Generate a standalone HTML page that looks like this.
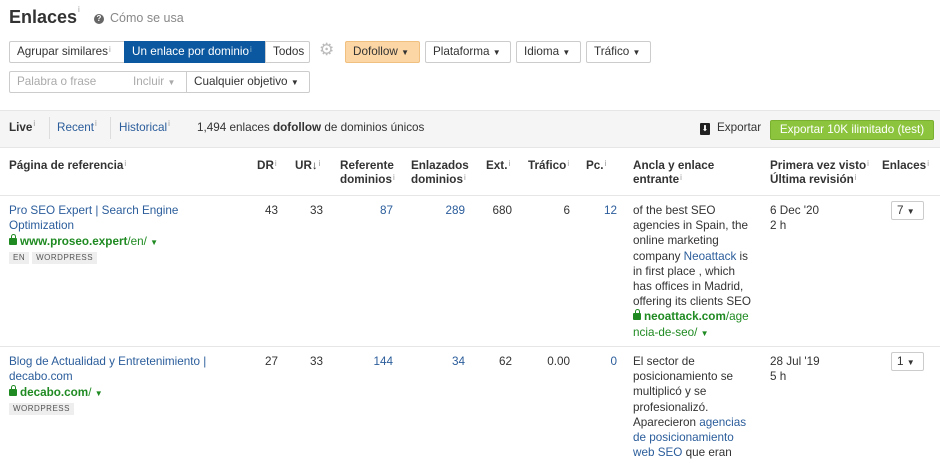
<!DOCTYPE html>
<html><head><meta charset="utf-8"><style>
*{margin:0;padding:0;box-sizing:border-box}
body{width:940px;height:463px;overflow:hidden;background:#fff;font-family:"Liberation Sans",Arial,sans-serif;font-size:11.7px;color:#333;position:relative}
.a{position:absolute;white-space:nowrap}
.btn{position:absolute;height:22px;border:1px solid #ccc;border-radius:2px;line-height:20px;padding:0 7px;background:#fff;color:#333;white-space:nowrap;overflow:hidden}
sup{font-size:8px;color:#999;vertical-align:top;position:relative;top:-2px;margin-left:1px}
.lk{color:#2b5d9b}
.gr{color:#1f8a22}
.lock{display:inline-block;width:8px;height:7px;background:#1f8a22;border-radius:1px;position:relative;margin-right:3px;top:0}
.lock:before{content:"";position:absolute;left:1.5px;top:-4px;width:3px;height:4px;border:1.5px solid #1f8a22;border-bottom:none;border-radius:3px 3px 0 0}
.tag{display:inline-block;background:#eee;color:#555;font-size:8px;padding:1px 4px;letter-spacing:.5px;margin-right:3px;line-height:10px}
.th{position:absolute;font-weight:bold;line-height:14px;color:#333;white-space:nowrap}
.r{text-align:right}
.c{position:absolute;line-height:15.2px;white-space:nowrap}
.dd{font-size:8px}
</style></head><body>
<div class="a" style="left:9px;top:7px;font-size:18px;font-weight:bold;color:#333">Enlaces<sup style="font-weight:normal">i</sup></div>
<div class="a" style="left:94px;top:14px;width:10px;height:10px;border-radius:50%;background:#666;color:#fff;font-size:8px;line-height:10px;text-align:center;font-weight:bold">?</div>
<div class="a" style="left:110px;top:11px;color:#888;font-size:12.5px">Cómo se usa</div>

<div class="btn" style="left:9px;top:41px;width:116px;border-radius:2px 0 0 2px">Agrupar similares<sup>i</sup></div>
<div class="btn" style="left:124px;top:41px;width:142px;background:#0b58a0;border-color:#0b58a0;color:#fff;border-radius:0">Un enlace por dominio<sup style="color:#9bc">i</sup></div>
<div class="btn" style="left:265px;top:41px;width:45px;border-radius:0 2px 2px 0">Todos</div>
<div class="a" style="left:319px;top:40px;font-size:17px;color:#bbb">⚙</div>
<div class="btn" style="left:345px;top:41px;width:75px;background:#fcd6a5;border-color:#f0c080">Dofollow <span class="dd">▼</span></div>
<div class="btn" style="left:425px;top:41px;width:86px">Plataforma <span class="dd">▼</span></div>
<div class="btn" style="left:516px;top:41px;width:65px">Idioma <span class="dd">▼</span></div>
<div class="btn" style="left:586px;top:41px;width:65px">Tráfico <span class="dd">▼</span></div>

<div class="btn" style="left:9px;top:71px;width:178px;color:#aaa;border-radius:2px 0 0 2px">Palabra o frase<span style="position:absolute;left:123px">Incluir <span class="dd">▼</span></span></div>
<div class="btn" style="left:186px;top:71px;width:124px;border-radius:0 2px 2px 0">Cualquier objetivo <span class="dd">▼</span></div>

<div class="a" style="left:0;top:110px;width:940px;height:38px;background:#f5f5f5;border-top:1px solid #e6e6e6;border-bottom:1px solid #e6e6e6"></div>
<div class="a" style="left:9px;top:121px;font-weight:bold">Live<sup style="font-weight:normal">i</sup></div>
<div class="a" style="left:49px;top:117px;width:1px;height:22px;background:#ddd"></div>
<div class="a lk" style="left:57px;top:121px">Recent<sup>i</sup></div>
<div class="a" style="left:110px;top:117px;width:1px;height:22px;background:#ddd"></div>
<div class="a lk" style="left:119px;top:121px">Historical<sup>i</sup></div>
<div class="a" style="left:197px;top:121px">1,494 enlaces <b>dofollow</b> de dominios únicos</div>
<div class="a" style="left:700px;top:123px;width:10px;height:12px;background:#222;border-radius:1px;color:#fff;font-size:8px;line-height:12px;text-align:center">⬇</div>
<div class="a" style="left:717px;top:121px">Exportar</div>
<div class="a" style="left:770px;top:120px;width:164px;height:20px;background:#8cc43e;border:1px solid #7ab030;border-radius:2px;color:#fff;text-align:center;line-height:18px">Exportar 10K ilimitado (test)</div>

<div class="th" style="left:9px;top:159px">Página de referencia<sup style="font-weight:normal">i</sup></div>
<div class="th" style="left:257px;top:159px">DR<sup style="font-weight:normal">i</sup></div>
<div class="th" style="left:295px;top:159px">UR↓<sup style="font-weight:normal">i</sup></div>
<div class="th" style="left:340px;top:159px">Referente<br>dominios<sup style="font-weight:normal">i</sup></div>
<div class="th" style="left:411px;top:159px">Enlazados<br>dominios<sup style="font-weight:normal">i</sup></div>
<div class="th" style="left:486px;top:159px">Ext.<sup style="font-weight:normal">i</sup></div>
<div class="th" style="left:528px;top:159px">Tráfico<sup style="font-weight:normal">i</sup></div>
<div class="th" style="left:586px;top:159px">Pc.<sup style="font-weight:normal">i</sup></div>
<div class="th" style="left:633px;top:159px">Ancla y enlace<br>entrante<sup style="font-weight:normal">i</sup></div>
<div class="th" style="left:770px;top:159px">Primera vez visto<sup style="font-weight:normal">i</sup><br>Última revisión<sup style="font-weight:normal">i</sup></div>
<div class="th" style="left:882px;top:159px">Enlaces<sup style="font-weight:normal">i</sup></div>
<div class="a" style="left:0;top:195px;width:940px;height:1px;background:#e6e6e6"></div>

<!-- row 1 -->
<div class="c lk" style="left:9px;top:203px">Pro SEO Expert | Search Engine<br>Optimization</div>
<div class="c" style="left:9px;top:234px"><span class="gr"><span class="lock"></span><b>www.proseo.expert</b>/en/ <span class="dd">▼</span></span></div>
<div class="c" style="left:9px;top:249px"><span class="tag">EN</span><span class="tag">WORDPRESS</span></div>
<div class="c r" style="left:240px;width:38px;top:203px">43</div>
<div class="c r" style="left:285px;width:38px;top:203px">33</div>
<div class="c r lk" style="left:340px;width:53px;top:203px">87</div>
<div class="c r lk" style="left:411px;width:54px;top:203px">289</div>
<div class="c r" style="left:480px;width:32px;top:203px">680</div>
<div class="c r" style="left:530px;width:40px;top:203px">6</div>
<div class="c r lk" style="left:586px;width:31px;top:203px">12</div>
<div class="c" style="left:633px;top:203px">of the best SEO<br>agencies in Spain, the<br>online marketing<br>company <span class="lk">Neoattack</span> is<br>in first place , which<br>has offices in Madrid,<br>offering its clients SEO<br><span class="gr"><span class="lock"></span><b>neoattack.com</b>/age<br>ncia-de-seo/ <span class="dd">▼</span></span></div>
<div class="c" style="left:770px;top:203px">6 Dec '20<br>2 h</div>
<div class="btn" style="left:891px;top:201px;width:33px;height:19px;line-height:17px;padding:0 5px">7 <span class="dd">▼</span></div>
<div class="a" style="left:0;top:346px;width:940px;height:1px;background:#e6e6e6"></div>

<!-- row 2 -->
<div class="c lk" style="left:9px;top:354px">Blog de Actualidad y Entretenimiento |<br>decabo.com</div>
<div class="c" style="left:9px;top:385px"><span class="gr"><span class="lock"></span><b>decabo.com</b>/ <span class="dd">▼</span></span></div>
<div class="c" style="left:9px;top:400px"><span class="tag">WORDPRESS</span></div>
<div class="c r" style="left:240px;width:38px;top:354px">27</div>
<div class="c r" style="left:285px;width:38px;top:354px">33</div>
<div class="c r lk" style="left:340px;width:53px;top:354px">144</div>
<div class="c r lk" style="left:411px;width:54px;top:354px">34</div>
<div class="c r" style="left:480px;width:32px;top:354px">62</div>
<div class="c r" style="left:530px;width:40px;top:354px">0.00</div>
<div class="c r lk" style="left:586px;width:31px;top:354px">0</div>
<div class="c" style="left:633px;top:354px">El sector de<br>posicionamiento se<br>multiplicó y se<br>profesionalizó.<br>Aparecieron <span class="lk">agencias</span><br><span class="lk">de posicionamiento</span><br><span class="lk">web SEO</span> que eran</div>
<div class="c" style="left:770px;top:354px">28 Jul '19<br>5 h</div>
<div class="btn" style="left:891px;top:352px;width:33px;height:19px;line-height:17px;padding:0 5px">1 <span class="dd">▼</span></div>
</body></html>
